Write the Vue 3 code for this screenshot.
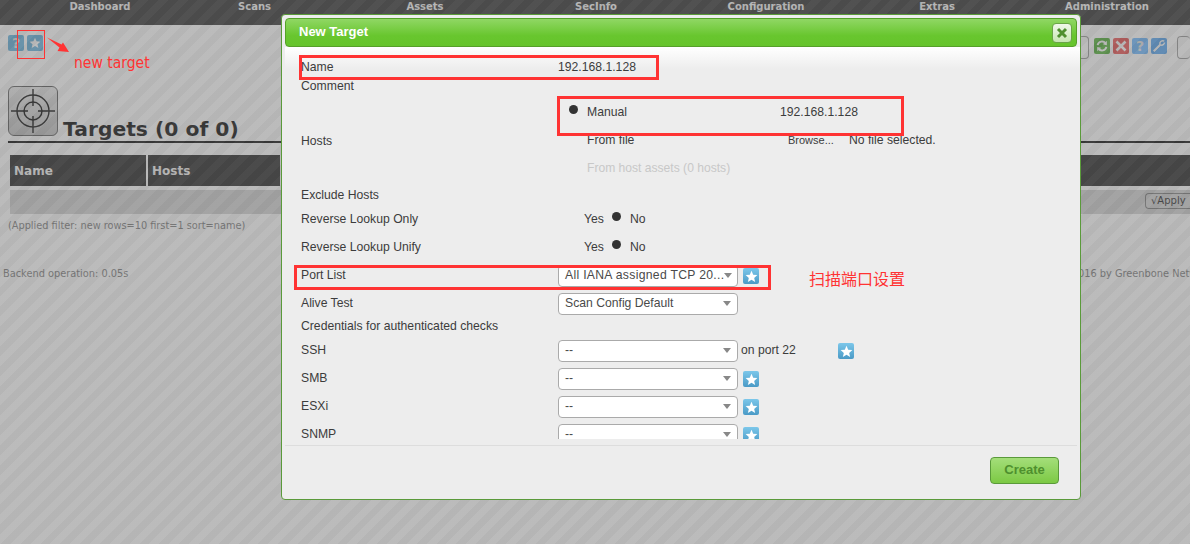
<script setup>
const navItems = ['Dashboard', 'Scans', 'Assets', 'SecInfo', 'Configuration', 'Extras', 'Administration']

const credentials = [
  { label: 'SSH', port: true },
  { label: 'SMB' },
  { label: 'ESXi' },
  { label: 'SNMP' }
]
</script>

<template>
  <div class="screen">
    <!-- page behind the dialog -->
    <header class="nav">
      <span v-for="item in navItems" :key="item">{{ item }}</span>
    </header>

    <div class="toolbar">
      <div class="tool-left">
        <span class="tool help">?</span>
        <span class="tool star-tool">
          <svg viewBox="0 0 16 16" width="12" height="12"><polygon points="8,1 10.1,5.8 15.2,6.3 11.3,9.7 12.5,14.8 8,12.1 3.5,14.8 4.7,9.7 .8,6.3 5.9,5.8" fill="#fff" /></svg>
        </span>
      </div>
      <div class="tool-right">
        <span class="ghost-box first"></span>
        <span class="tool refresh">
          <svg viewBox="0 0 16 16" width="14" height="14" fill="none" stroke="#fff" stroke-width="2.2"><path d="M3 7a5 5 0 0 1 9-2" /><path d="M13 9a5 5 0 0 1-9 2" /><polygon points="13.5,2 13.5,7 8.8,6" fill="#fff" stroke="none" /><polygon points="2.5,14 2.5,9 7.2,10" fill="#fff" stroke="none" /></svg>
        </span>
        <span class="tool cancel">
          <svg viewBox="0 0 16 16" width="12" height="12" stroke="#fff" stroke-width="3.4"><path d="M2 2l12 12M14 2L2 14" /></svg>
        </span>
        <span class="tool help right-help">?</span>
        <span class="tool wrench">
          <svg viewBox="0 0 16 16" width="14" height="14" fill="none" stroke="#fff" stroke-width="2.4"><path d="M2 14L10 6" /><path d="M9 6a3.4 3.4 0 0 1 5-3.6M10 7a3.4 3.4 0 0 0 4.2-3" stroke-width="1.6" /></svg>
        </span>
        <span class="ghost-box last"></span>
      </div>
    </div>

    <div class="heading">
      <span class="big-icon">
        <svg viewBox="0 0 50 50" width="50" height="50" fill="none" stroke="#000" stroke-width="1.4">
          <circle cx="25" cy="25" r="16" />
          <circle cx="25" cy="25" r="9" />
          <path d="M3 25h17M30 25h17M25 3v17M25 30v17" />
        </svg>
      </span>
      <h1>Targets (0 of 0)</h1>
    </div>

    <div class="table-head">
      <div class="cell name">Name</div>
      <div class="cell hosts">Hosts</div>
      <div class="cell rest"></div>
    </div>
    <div class="table-row">
      <span class="apply">√Apply</span>
    </div>
    <p class="filter">(Applied filter: new rows=10 first=1 sort=name)</p>
    <footer class="page-foot">
      <span>Backend operation: 0.05s</span>
      <span class="copy">Copyright 2009-2016 by Greenbone Networks GmbH</span>
    </footer>

    <div class="overlay"></div>

    <!-- dialog -->
    <section class="dialog">
      <div class="titlebar">
        <span class="title">New Target</span>
        <span class="close">
          <svg viewBox="0 0 12 12" width="12" height="12" stroke="#4f8f2f" stroke-width="3"><path d="M2 2l8 8M10 2l-8 8" /></svg>
        </span>
      </div>

      <div class="body">
        <div class="row short"><label>Name</label><div class="value">192.168.1.128</div></div>
        <div class="row short"><label>Comment</label><div></div></div>

        <div class="row hosts-row">
          <label>Hosts</label>
          <div class="host-options">
            <div class="host-option">
              <i class="dot"></i><span class="opt-name">Manual</span><span class="opt-value">192.168.1.128</span>
            </div>
            <div class="host-option">
              <span class="opt-name">From file</span>
              <span class="browse">Browse...</span><span class="no-file">No file selected.</span>
            </div>
            <div class="host-option muted">
              <span class="opt-name">From host assets (0 hosts)</span>
            </div>
          </div>
        </div>

        <div class="row short exclude"><label>Exclude Hosts</label><div></div></div>

        <div class="row">
          <label>Reverse Lookup Only</label>
          <div class="yes-no"><span>Yes</span><i class="dot"></i><span>No</span></div>
        </div>
        <div class="row">
          <label>Reverse Lookup Unify</label>
          <div class="yes-no"><span>Yes</span><i class="dot"></i><span>No</span></div>
        </div>

        <div class="row">
          <label>Port List</label>
          <div class="field">
            <div class="select"><span class="long">All IANA assigned TCP 20...</span><i class="caret"></i></div>
            <span class="star">
              <svg viewBox="0 0 16 16" width="13" height="13"><polygon points="8,1 10.1,5.8 15.2,6.3 11.3,9.7 12.5,14.8 8,12.1 3.5,14.8 4.7,9.7 .8,6.3 5.9,5.8" fill="#fff" /></svg>
            </span>
          </div>
        </div>
        <div class="row">
          <label>Alive Test</label>
          <div class="field">
            <div class="select"><span>Scan Config Default</span><i class="caret"></i></div>
          </div>
        </div>
        <div class="row short creds"><label class="wide">Credentials for authenticated checks</label></div>

        <div v-for="cred in credentials" :key="cred.label" class="row">
          <label>{{ cred.label }}</label>
          <div class="field">
            <div class="select"><span>--</span><i class="caret"></i></div>
            <span v-if="cred.port" class="port">on port 22</span>
            <span class="star">
              <svg viewBox="0 0 16 16" width="13" height="13"><polygon points="8,1 10.1,5.8 15.2,6.3 11.3,9.7 12.5,14.8 8,12.1 3.5,14.8 4.7,9.7 .8,6.3 5.9,5.8" fill="#fff" /></svg>
            </span>
          </div>
        </div>
      </div>

      <div class="actions">
        <button class="create">Create</button>
      </div>
    </section>

    <!-- red annotations drawn over the screenshot -->
    <div class="mark thin star-mark"></div>
    <svg class="arrow" width="26" height="18" viewBox="0 0 26 18"><path d="M1 .5L15.5 7.5L17 5.5L23 15L11.5 14L13.5 10.5Z" fill="#f33" /></svg>
    <span class="note new-target">new target</span>
    <div class="mark name-mark"></div>
    <div class="mark manual-mark"></div>
    <div class="mark port-mark"></div>
    <span class="note port-note">扫描端口设置</span>
  </div>
</template>

<style>
html, body { margin: 0; overflow: hidden; }
</style>

<style scoped>
.screen {
  position: relative;
  width: 1190px;
  height: 544px;
  overflow: hidden;
  background: #fff;
  font-family: "Liberation Sans", Arial, sans-serif;
  font-size: 12.2px;
  color: #3c3c3c;
}

/* PAGE */
.nav {
  display: grid;
  grid-template-columns: 154px 155px 186px 156px 184px 158px 182px;
  width: 1198px;
  box-sizing: border-box;
  height: 25px;
  padding-left: 23px;
  background: #2a2a2a;
  color: #f6f6f6;
  font: bold 10px/14px "DejaVu Sans", sans-serif;
  text-align: center;
}

.toolbar {
  display: flex;
  justify-content: space-between;
  height: 61px;
  padding: 10px 0 0 8px;
  box-sizing: border-box;
}
.tool-left { display: flex; gap: 3px; }
.tool-right { display: flex; gap: 3px; padding-top: 3px; }
.tool {
  display: flex;
  align-items: center;
  justify-content: center;
  width: 16px;
  height: 16px;
  border-radius: 2px;
  color: #e8e8e8;
  font: bold 14px/16px "DejaVu Sans", sans-serif;
}
.help { background: #5caedc; }
.right-help { background: #64b4ff; }
.star-tool { background: #5caedc; }
.refresh { background: #48ac2c; }
.cancel { background: #e84848; }
.wrench { background: #4ca0f0; }
.ghost-box {
  display: block;
  height: 21px;
  margin-top: -2px;
  border: 1px solid #999;
  border-radius: 4px;
}
.ghost-box.first { width: 14px; border-left: 0; margin-right: 2px; }
.ghost-box.last { width: 12px; border-right: 0; margin-left: 7px; }

.heading {
  display: flex;
  align-items: flex-end;
  height: 57px;
  margin: 0 0 12px 8px;
  border-bottom: 2px solid #000;
  box-sizing: border-box;
}
.big-icon {
  display: block;
  width: 50px;
  height: 50px;
  box-sizing: border-box;
  border: 1px solid #555;
  border-radius: 6px;
  background: linear-gradient(#e8e8e8, #bbb);
  margin-bottom: 5px;
}
.big-icon svg { display: block; margin: -1px; }
h1 {
  margin: 0 0 0 5px;
  font: bold 20.3px/24px "DejaVu Sans", sans-serif;
  color: #000;
}

.table-head {
  display: flex;
  gap: 2px;
  height: 31px;
  margin-left: 10px;
}
.cell {
  background: #1e1e1e;
  color: #f4f4f4;
  font: bold 12px/33px "DejaVu Sans", sans-serif;
  padding-left: 4px;
  box-sizing: border-box;
}
.cell.name { width: 136px; }
.cell.hosts { width: 132px; }
.cell.rest { flex: 1; }
.table-row {
  display: flex;
  justify-content: flex-end;
  height: 24px;
  margin: 4px 0 0 10px;
  padding-top: 3px;
  box-sizing: border-box;
  background: #d0d0d0;
}
.apply {
  width: 45px;
  height: 16px;
  box-sizing: border-box;
  border: 1px solid #777;
  border-radius: 4px 0 0 4px;
  border-right: 0;
  padding-left: 5px;
  font: 10px/14px "DejaVu Sans", sans-serif;
  color: #222;
}
.filter {
  margin: 6px 0 0 8px;
  font: 9.75px/12px "DejaVu Sans", sans-serif;
  color: #777;
}
.page-foot {
  display: flex;
  justify-content: space-between;
  margin-top: 36px;
  padding-left: 3px;
  font: 9.8px/12px "DejaVu Sans", sans-serif;
  color: #777;
  white-space: nowrap;
}
.copy { margin-right: -62px; }

.overlay {
  position: absolute;
  inset: 0;
  background: repeating-linear-gradient(135deg,
    rgba(120, 120, 120, .5) 0 7px,
    rgba(108, 108, 108, .5) 7px 14px);
}

/* DIALOG */
.dialog {
  position: absolute;
  left: 281px;
  top: 14px;
  width: 800px;
  height: 486px;
  box-sizing: border-box;
  padding: 3px;
  background: #ededed;
  border: 1px solid #5a9a3a;
  border-radius: 4px;
  display: flex;
  flex-direction: column;
}
.titlebar {
  display: flex;
  align-items: center;
  justify-content: space-between;
  height: 29px;
  flex: none;
  box-sizing: border-box;
  padding: 0 4px 0 13px;
  border: 1px solid #56a02a;
  border-radius: 4px;
  background: linear-gradient(#90d764, #68c62e 62%, #66c42c);
}
.title {
  color: #fff;
  font-weight: bold;
  font-size: 13px;
  padding-bottom: 2px;
}
.close {
  display: flex;
  align-items: center;
  justify-content: center;
  width: 20px;
  height: 20px;
  box-sizing: border-box;
  border: 1px solid #6aa548;
  border-radius: 4px;
  background: linear-gradient(#f0f8ea, #c7e5b2);
}

.body {
  height: 392px;
  flex: none;
  overflow: hidden;
  padding: 11px 0 0 16px;
  box-sizing: border-box;
  margin-right: -3px;
  background: linear-gradient(#fff, #ededed 22px);
}
.row {
  display: grid;
  grid-template-columns: 257px 1fr;
  align-items: center;
  min-height: 28px;
}
/* text sits a pixel above the box centre in these rows */
.row > label, .value, .yes-no, .host-option, .select, .port { padding-bottom: 2px; }
.row.short { min-height: 19px; }
.row.exclude { margin-top: 3px; margin-bottom: 1px; }
.row.creds { margin-top: -1px; margin-bottom: 1px; }
.row.hosts-row > label { padding-bottom: 0; }
.wide { white-space: nowrap; }
.hosts-row { margin-top: 3px; }

.dot {
  display: block;
  width: 9px;
  height: 9px;
  border-radius: 50%;
  background: #333;
}
.host-option {
  display: flex;
  align-items: center;
  height: 28px;
  box-sizing: border-box;
  padding-left: 29px;
  position: relative;
}
.host-option .dot {
  position: absolute;
  left: 11px;
  top: 6px;
}
.opt-name { width: 193px; flex: none; white-space: nowrap; }
.browse { margin-left: 8px; width: 61px; font-size: 11px; flex: none; }
.muted { color: #c8c8c8; font-size: 12.1px; }
.yes-no {
  display: flex;
  align-items: center;
  padding-left: 26px;
}
.yes-no .dot { margin: -5px 9px 0 8px; }

.field {
  display: flex;
  align-items: center;
}
.select {
  display: flex;
  align-items: center;
  justify-content: space-between;
  width: 180px;
  height: 22px;
  flex: none;
  box-sizing: border-box;
  padding-left: 6px;
  background: #fff;
  border: 1px solid #aaa;
  border-radius: 4px;
  color: #4a4a4a;
  white-space: nowrap;
}
.long { letter-spacing: .3px; }
.caret {
  width: 0;
  height: 0;
  margin-right: 6px;
  border: 4px solid transparent;
  border-top: 5px solid #888;
  border-bottom: 0;
}
.star {
  display: flex;
  align-items: center;
  justify-content: center;
  width: 16px;
  height: 16px;
  margin-left: 5px;
  border-radius: 2px;
  background: linear-gradient(#7cc7ea, #4a9ac6);
}
.port { margin-left: 3px; width: 92px; flex: none; box-sizing: border-box; }

.actions {
  display: flex;
  justify-content: flex-end;
  flex: 1;
  margin-top: 6px;
  padding: 11px 18px 0 0;
  border-top: 1px solid #ddd;
  align-items: flex-start;
}
.create {
  width: 69px;
  height: 27px;
  padding: 0 0 2px;
  border: 1px solid #5a9a3a;
  border-radius: 4px;
  background: linear-gradient(#a4de7a, #7cc944);
  color: #4e8f2e;
  font: bold 13px "Liberation Sans", sans-serif;
}

/* ANNOTATIONS */
.mark {
  position: absolute;
  box-sizing: border-box;
  border: 3px solid #f33;
}
.mark.thin { border-width: 1px; }
.star-mark { left: 17px; top: 30px; width: 28px; height: 29px; }
.name-mark { left: 299px; top: 55px; width: 360px; height: 25px; }
.manual-mark { left: 557px; top: 96px; width: 347px; height: 40px; }
.port-mark { left: 294px; top: 265px; width: 477px; height: 25px; }
.arrow { position: absolute; left: 46px; top: 37px; }
.note {
  position: absolute;
  color: #f33;
  font-size: 16px;
  line-height: 20px;
  white-space: nowrap;
}
.new-target {
  left: 74px;
  top: 53px;
  font-family: "DejaVu Sans", sans-serif;
  font-stretch: condensed;
  font-size: 15.5px;
}
.port-note { left: 809px; top: 268px; font-family: "Noto Sans CJK SC", sans-serif; }
</style>
